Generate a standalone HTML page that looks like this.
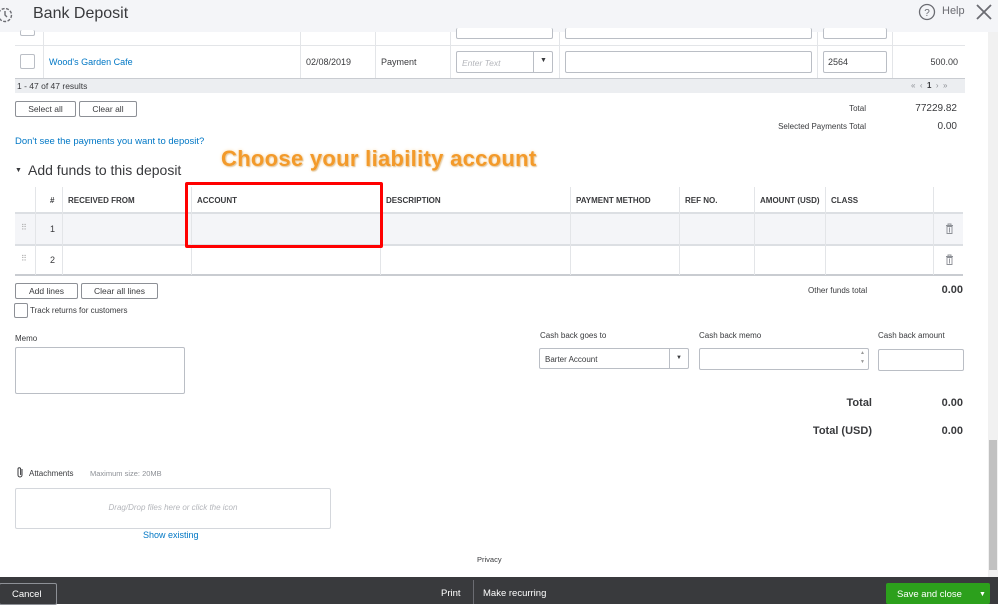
<!DOCTYPE html>
<html><head><style>
*{box-sizing:border-box;margin:0;padding:0}
body{width:998px;height:604px;overflow:hidden;background:#fff;font-family:"Liberation Sans",sans-serif;color:#393a3d;position:relative;font-size:9px}
.a{position:absolute}
.btn{position:absolute;border:1px solid #8d9096;border-radius:2px;background:#fff;font-size:8.5px;text-align:center;line-height:14px;color:#393a3d}
.vl{position:absolute;width:1px;background:#e3e5e8}
.hl{position:absolute;height:1px;background:#d4d7dc}
.inp{position:absolute;border:1px solid #babec5;border-radius:2px;background:#fff}
.th{position:absolute;top:196px;font-size:8px;font-weight:bold;color:#393a3d}
.r{text-align:right}
</style></head><body>
<div class="a" style="left:0;top:0;width:998px;height:32px;background:#f4f5f8"></div>
<svg class="a" style="left:-4px;top:6px" width="18" height="18" viewBox="0 0 18 18"><circle cx="9" cy="9" r="6.5" fill="none" stroke="#6b6c72" stroke-width="1.4" stroke-dasharray="3 1.5"/><path d="M9 5v4l2 2" stroke="#6b6c72" stroke-width="1.4" fill="none"/></svg>
<div class="a" style="left:33px;top:5px;font-size:16px;color:#393a3d">Bank Deposit</div>
<svg class="a" style="left:918px;top:3px" width="18" height="18"><circle cx="9" cy="9" r="7.5" fill="none" stroke="#6b6c72" stroke-width="1.3"/><text x="9" y="13" font-size="10" text-anchor="middle" fill="#6b6c72" font-family="Liberation Sans">?</text></svg>
<div class="a" style="left:942px;top:5px;font-size:11px;color:#6b6c72">Help</div>
<svg class="a" style="left:975px;top:3px" width="18" height="18"><path d="M2 2L16 16M16 2L2 16" stroke="#6b6c72" stroke-width="1.8"/></svg>
<div class="a" style="left:988px;top:32px;width:10px;height:545px;background:#f1f1f1"></div>
<div class="a" style="left:989px;top:440px;width:8px;height:130px;background:#c1c1c1"></div>
<div class="vl" style="left:43px;top:32px;height:46px"></div>
<div class="vl" style="left:300px;top:32px;height:46px"></div>
<div class="vl" style="left:375px;top:32px;height:46px"></div>
<div class="vl" style="left:450px;top:32px;height:46px"></div>
<div class="vl" style="left:559px;top:32px;height:46px"></div>
<div class="vl" style="left:817px;top:32px;height:46px"></div>
<div class="vl" style="left:892px;top:32px;height:46px"></div>
<div class="hl" style="left:15px;top:45px;width:950px;background:#e3e5e8"></div>
<div class="inp" style="left:20px;top:30px;width:15px;height:6px;border-top:none"></div>
<div class="inp" style="left:456px;top:28px;width:97px;height:11px;border-top:none"></div>
<div class="inp" style="left:565px;top:28px;width:247px;height:11px;border-top:none"></div>
<div class="inp" style="left:823px;top:28px;width:64px;height:11px;border-top:none"></div>
<div class="inp" style="left:20px;top:54px;width:15px;height:15px"></div>
<div class="a" style="left:49px;top:57px;color:#0077c5">Wood's Garden Cafe</div>
<div class="a" style="left:306px;top:57px">02/08/2019</div>
<div class="a" style="left:381px;top:57px">Payment</div>
<div class="inp" style="left:456px;top:51px;width:97px;height:22px"></div>
<div class="a" style="left:462px;top:58px;font-style:italic;color:#b4b6bb;font-size:8.5px">Enter Text</div>
<div class="vl" style="left:533px;top:52px;height:20px;background:#babec5"></div>
<div class="a" style="left:540px;top:57px;font-size:7px">▼</div>
<div class="inp" style="left:565px;top:51px;width:247px;height:22px"></div>
<div class="inp" style="left:823px;top:51px;width:64px;height:22px"></div>
<div class="a" style="left:828px;top:57px">2564</div>
<div class="a r" style="left:900px;top:57px;width:58px">500.00</div>
<div class="a" style="left:15px;top:78px;width:950px;height:15px;background:#eceef1;border-top:1px solid #c9ccd1"></div>
<div class="a" style="left:17px;top:81px;font-size:8.5px">1 - 47 of 47 results</div>
<div class="a" style="left:911px;top:81px;font-size:8px;color:#8d9096">«&nbsp; ‹&nbsp; <b style="color:#393a3d">1</b> &nbsp;›&nbsp; »</div>
<div class="btn" style="left:15px;top:101px;width:61px;height:16px">Select all</div>
<div class="btn" style="left:79px;top:101px;width:58px;height:16px">Clear all</div>
<div class="a r" style="left:800px;top:104px;width:66px;font-size:8px">Total</div>
<div class="a r" style="left:890px;top:103px;width:67px;font-size:10px">77229.82</div>
<div class="a r" style="left:700px;top:122px;width:166px;font-size:8px">Selected Payments Total</div>
<div class="a r" style="left:900px;top:121px;width:57px;font-size:10px">0.00</div>
<div class="a" style="left:15px;top:136px;color:#0077c5;font-size:9.5px">Don't see the payments you want to deposit?</div>
<div class="a" style="left:15px;top:167px;font-size:7px">▼</div>
<div class="a" style="left:28px;top:162px;font-size:14px">Add funds to this deposit</div>
<div class="a" style="left:221px;top:146px;font-size:22px;font-weight:bold;color:#f39a2a;text-shadow:0 0 3px #f9d9a8,1px 1px 1px #d9c2a0;letter-spacing:0.3px">Choose your liability account</div>
<div class="a" style="left:15px;top:213px;width:948px;height:31px;background:#f4f5f8"></div>
<div class="hl" style="left:15px;top:212px;width:948px;height:2px;background:#dcdfe3"></div>
<div class="hl" style="left:15px;top:244px;width:948px;height:2px;background:#dcdfe3"></div>
<div class="hl" style="left:15px;top:274px;width:948px;height:2px;background:#c9ccd1"></div>
<div class="vl" style="left:35px;top:187px;height:88px"></div>
<div class="vl" style="left:62px;top:187px;height:88px"></div>
<div class="vl" style="left:191px;top:187px;height:88px"></div>
<div class="vl" style="left:380px;top:187px;height:88px"></div>
<div class="vl" style="left:570px;top:187px;height:88px"></div>
<div class="vl" style="left:679px;top:187px;height:88px"></div>
<div class="vl" style="left:754px;top:187px;height:88px"></div>
<div class="vl" style="left:825px;top:187px;height:88px"></div>
<div class="vl" style="left:933px;top:187px;height:88px"></div>
<div class="th" style="left:50px">#</div>
<div class="th" style="left:68px">RECEIVED FROM</div>
<div class="th" style="left:197px">ACCOUNT</div>
<div class="th" style="left:386px">DESCRIPTION</div>
<div class="th" style="left:576px">PAYMENT METHOD</div>
<div class="th" style="left:685px">REF NO.</div>
<div class="th" style="left:760px">AMOUNT (USD)</div>
<div class="th" style="left:831px">CLASS</div>
<div class="a" style="left:21px;top:223px;font-size:8px;color:#aaa">⠿</div>
<div class="a" style="left:21px;top:254px;font-size:8px;color:#aaa">⠿</div>
<div class="a" style="left:50px;top:224px">1</div>
<div class="a" style="left:50px;top:255px">2</div>
<svg class="a" style="left:945px;top:223px" width="9" height="11"><path d="M1 2.5h7M3 2.5V1h3v1.5M2 3.5h5v7H2zM4.5 4.5v5" stroke="#8d9096" stroke-width="0.9" fill="none"/></svg>
<svg class="a" style="left:945px;top:254px" width="9" height="11"><path d="M1 2.5h7M3 2.5V1h3v1.5M2 3.5h5v7H2zM4.5 4.5v5" stroke="#8d9096" stroke-width="0.9" fill="none"/></svg>
<div class="a" style="left:185px;top:182px;width:198px;height:66px;border:3px solid #f00;border-radius:2px"></div>
<div class="btn" style="left:15px;top:283px;width:63px;height:16px">Add lines</div>
<div class="btn" style="left:81px;top:283px;width:77px;height:16px">Clear all lines</div>
<div class="a" style="left:808px;top:286px;font-size:8px">Other funds total</div>
<div class="a r" style="left:900px;top:284px;width:63px;font-size:11px;font-weight:bold">0.00</div>
<div class="inp" style="left:14px;top:303px;width:14px;height:15px;border-color:#8d9096"></div>
<div class="a" style="left:30px;top:306px;font-size:8px">Track returns for customers</div>
<div class="a" style="left:15px;top:334px;font-size:8px">Memo</div>
<div class="inp" style="left:15px;top:347px;width:170px;height:47px"></div>
<div class="a" style="left:540px;top:331px;font-size:8px">Cash back goes to</div>
<div class="inp" style="left:539px;top:348px;width:150px;height:21px"></div>
<div class="a" style="left:545px;top:355px;font-size:8px">Barter Account</div>
<div class="vl" style="left:669px;top:349px;height:19px;background:#babec5"></div>
<div class="a" style="left:676px;top:355px;font-size:6px">▼</div>
<div class="a" style="left:699px;top:331px;font-size:8px">Cash back memo</div>
<div class="inp" style="left:699px;top:348px;width:170px;height:22px"></div>
<div class="a" style="left:860px;top:349px;font-size:5px;color:#999;line-height:9px">▲<br>▼</div>
<div class="a" style="left:878px;top:331px;font-size:8px">Cash back amount</div>
<div class="inp" style="left:878px;top:349px;width:86px;height:22px"></div>
<div class="a r" style="left:800px;top:397px;width:72px;font-size:11px;font-weight:bold">Total</div>
<div class="a r" style="left:900px;top:397px;width:63px;font-size:11px;font-weight:bold">0.00</div>
<div class="a r" style="left:780px;top:425px;width:92px;font-size:11px;font-weight:bold">Total (USD)</div>
<div class="a r" style="left:900px;top:425px;width:63px;font-size:11px;font-weight:bold">0.00</div>
<svg class="a" style="left:16px;top:466px" width="9" height="13"><path d="M6 3v6a2 2 0 0 1-4 0V3a1.3 1.3 0 0 1 2.6 0v6" stroke="#393a3d" stroke-width="1" fill="none"/></svg>
<div class="a" style="left:29px;top:469px;font-size:8px">Attachments</div>
<div class="a" style="left:90px;top:469px;font-size:7.5px;color:#8d9096">Maximum size: 20MB</div>
<div class="inp" style="left:15px;top:488px;width:316px;height:41px;border-color:#d4d7dc"></div>
<div class="a" style="left:15px;top:503px;width:316px;text-align:center;font-style:italic;font-size:8px;color:#b4b6bb">Drag/Drop files here or click the icon</div>
<div class="a" style="left:143px;top:530px;color:#0077c5;font-size:9px">Show existing</div>
<div class="a" style="left:477px;top:555px;font-size:7.5px">Privacy</div>
<div class="a" style="left:0;top:577px;width:998px;height:27px;background:#393a3d"></div>
<div class="a" style="left:-1px;top:583px;width:58px;height:22px;border:1px solid #8d9096;border-radius:2px"></div>
<div class="a" style="left:12px;top:589px;color:#fff;font-size:9.5px">Cancel</div>
<div class="a" style="left:441px;top:588px;color:#fff;font-size:9.5px">Print</div>
<div class="a" style="left:473px;top:580px;width:1px;height:24px;background:#6b6c72"></div>
<div class="a" style="left:483px;top:588px;color:#fff;font-size:9.5px">Make recurring</div>
<div class="a" style="left:886px;top:583px;width:104px;height:21px;background:#2ca01c;border-radius:2px"></div>
<div class="a" style="left:897px;top:589px;color:#fff;font-size:9.5px">Save and close</div>
<div class="a" style="left:979px;top:591px;color:#fff;font-size:7px">▼</div>
</body></html>
